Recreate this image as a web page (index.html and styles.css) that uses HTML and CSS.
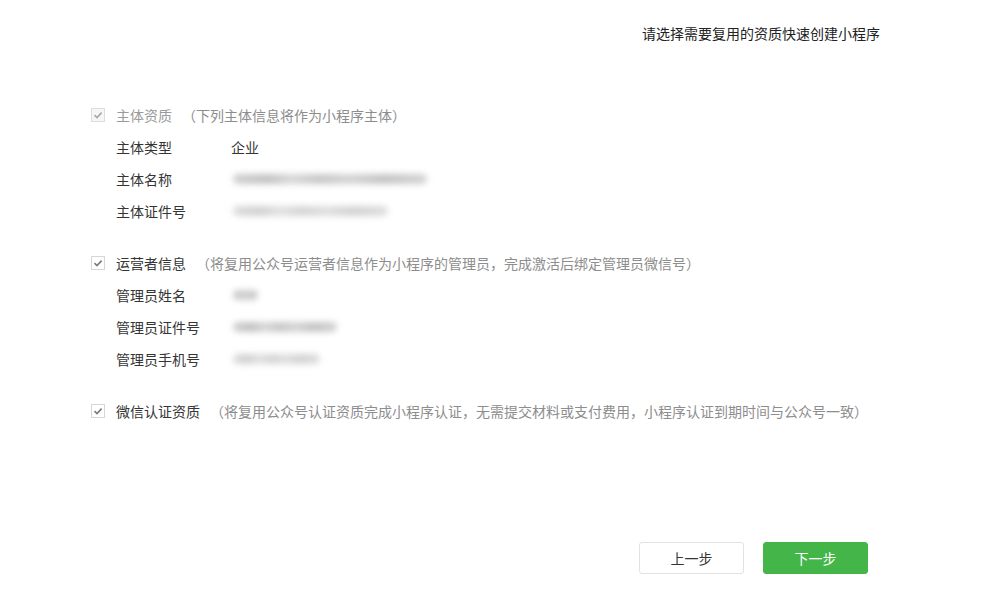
FILE: index.html
```html
<!DOCTYPE html>
<html lang="zh-CN">
<head>
<meta charset="utf-8">
<title>复用资质快速创建小程序</title>
<link rel="stylesheet" href="styles.css">
</head>
<body>
<div class="page">
  <div class="title">请选择需要复用的资质快速创建小程序</div>

  <div class="form">
    <div class="section">
      <div class="sec-head">
        <span class="checkbox disabled"><svg viewBox="0 0 14 14" width="14" height="14"><path d="M3.5 7.2 L6 9.6 L10.6 4.6" fill="none" stroke="#a8a8a8" stroke-width="1.6"/></svg></span>
        <span class="sec-name muted">主体资质</span>
        <span class="sec-desc">（下列主体信息将作为小程序主体）</span>
      </div>
      <div class="row"><span class="label">主体类型</span><span class="value">企业</span></div>
      <div class="row"><span class="label">主体名称</span><span class="value"><span class="blur" style="width:194px"></span></span></div>
      <div class="row"><span class="label">主体证件号</span><span class="value"><span class="blur light" style="width:155px"></span></span></div>
    </div>

    <div class="section">
      <div class="sec-head">
        <span class="checkbox"><svg viewBox="0 0 14 14" width="14" height="14"><path d="M3.5 7.2 L6 9.6 L10.6 4.6" fill="none" stroke="#7a7a7a" stroke-width="1.6"/></svg></span>
        <span class="sec-name">运营者信息</span>
        <span class="sec-desc">（将复用公众号运营者信息作为小程序的管理员，完成激活后绑定管理员微信号）</span>
      </div>
      <div class="row"><span class="label">管理员姓名</span><span class="value"><span class="blur" style="width:25px"></span></span></div>
      <div class="row"><span class="label">管理员证件号</span><span class="value"><span class="blur" style="width:104px"></span></span></div>
      <div class="row"><span class="label">管理员手机号</span><span class="value"><span class="blur light" style="width:87px"></span></span></div>
    </div>

    <div class="section">
      <div class="sec-head">
        <span class="checkbox"><svg viewBox="0 0 14 14" width="14" height="14"><path d="M3.5 7.2 L6 9.6 L10.6 4.6" fill="none" stroke="#7a7a7a" stroke-width="1.6"/></svg></span>
        <span class="sec-name">微信认证资质</span>
        <span class="sec-desc">（将复用公众号认证资质完成小程序认证，无需提交材料或支付费用，小程序认证到期时间与公众号一致）</span>
      </div>
    </div>
  </div>

  <div class="footer">
    <button class="btn btn-default">上一步</button>
    <button class="btn btn-primary">下一步</button>
  </div>
</div>
</body>
</html>
```

FILE: styles.css
```css
* { box-sizing: border-box; }
html, body {
  margin: 0;
  padding: 0;
  background: #ffffff;
}
body {
  font-family: "Noto Sans CJK SC", "Noto Sans", "Liberation Sans", sans-serif;
  font-size: 14px;
  color: #353535;
}
.page {
  width: 984px;
  height: 598px;
  overflow: hidden;
}
.title {
  padding-top: 23px;
  padding-right: 104px;
  text-align: right;
  line-height: 20px;
  color: #222222;
}
.form {
  margin-top: 56px;
  padding-left: 91px;
}
.section + .section {
  margin-top: 20px;
}
.sec-head {
  display: flex;
  align-items: center;
  height: 32px;
  line-height: 32px;
}
.checkbox {
  width: 14px;
  height: 14px;
  border: 1px solid #d6d6d6;
  background: #ffffff;
  display: flex;
  align-items: center;
  justify-content: center;
  margin-right: 11px;
  margin-top: -1px;
}
.checkbox svg { display: block; flex: none; }
.checkbox.disabled {
  background: #f6f6f6;
  border-color: #dddddd;
}
.sec-name {
  color: #353535;
}
.sec-name.muted {
  color: #9a9a9a;
}
.sec-desc {
  color: #8d8d8d;
  margin-left: 10px;
}
.row {
  display: flex;
  align-items: center;
  height: 32px;
  line-height: 32px;
  padding-left: 25px;
}
.label {
  width: 115px;
  color: #353535;
}
.value {
  display: flex;
  align-items: center;
  color: #353535;
}
.blur {
  display: block;
  height: 10px;
  margin-left: 2px;
  border-radius: 5px;
  background: linear-gradient(90deg, #c4c4c4 0%, #b2b2b2 18%, #cdcdcd 30%, #b8b8b8 45%, #c9c9c9 60%, #b4b4b4 78%, #c8c8c8 100%);
  filter: blur(3px);
  opacity: 0.8;
}
.blur.light {
  opacity: 0.6;
}
.footer {
  display: flex;
  justify-content: flex-end;
  gap: 19px;
  margin-top: 115px;
  padding-right: 116px;
}
.btn {
  width: 105px;
  height: 32px;
  border-radius: 3px;
  font-family: inherit;
  font-size: 14px;
  line-height: 30px;
  padding: 0;
  cursor: pointer;
}
.btn-default {
  background: #ffffff;
  border: 1px solid #e2e2e2;
  color: #353535;
}
.btn-primary {
  background: #44b549;
  border: 1px solid #44b549;
  color: #ffffff;
}
```
